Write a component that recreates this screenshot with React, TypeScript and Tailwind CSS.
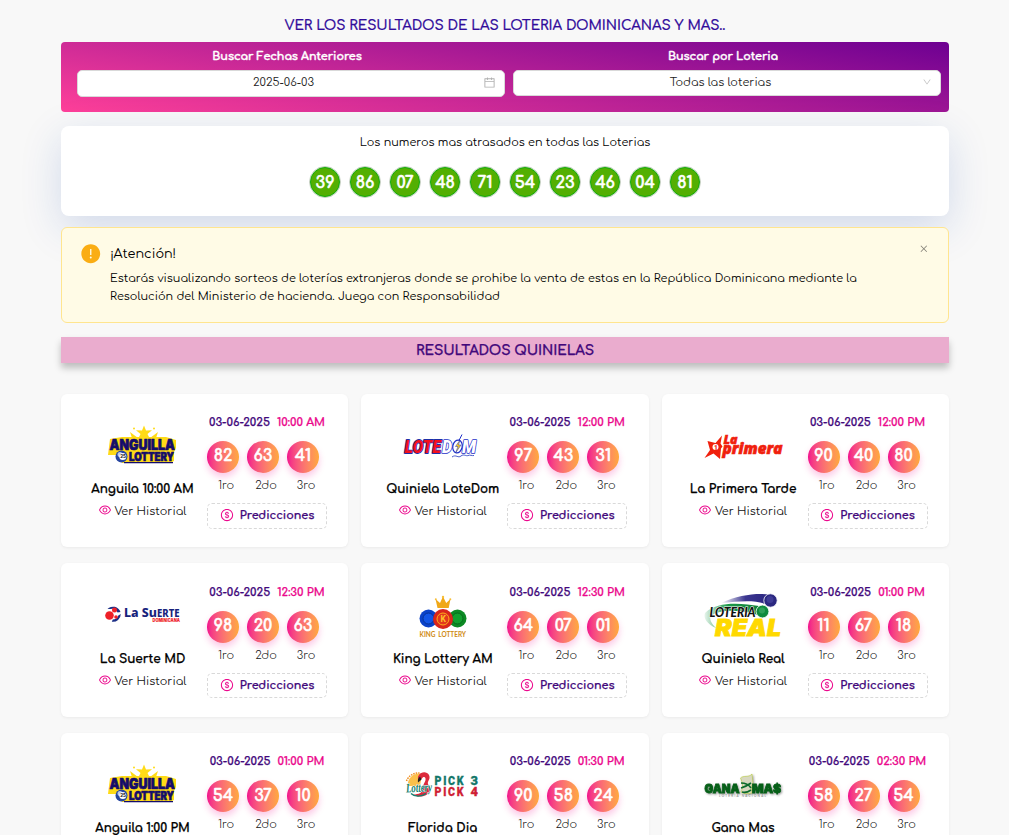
import type { ReactNode } from "react";
import {
  AiFillExclamationCircle,
  AiOutlineCalendar,
  AiOutlineClose,
  AiOutlineDollarCircle,
  AiOutlineDown,
  AiOutlineEye,
} from "react-icons/ai";

const overdue = ["39", "86", "07", "48", "71", "54", "23", "46", "04", "81"];

function LogoFrame({ children }: { children: ReactNode }) {
  return (
    <svg viewBox="0 0 84 56" className="h-14 w-21 shrink-0 overflow-visible">
      {children}
    </svg>
  );
}

function AnguillaLogo() {
  return (
    <LogoFrame>
      <path d="M44 6.500l2 5 6-.3-4.500 3.800 3 6H37.500l3-6-4.500-3.800 6 .3z" fill="#ffdb16" />
      <path d="M30 13l8 6h-6zM58 13l-8 6h6z" fill="#ffdb16" />
      <circle cx="34" cy="9.500" r="1" fill="#ffdb16" />
      <circle cx="54" cy="9.500" r="1" fill="#ffdb16" />
      <path d="M10 20l12-2h44l10 3v8l-2 4v9l-4 2H22l-3-8H8z" fill="#ffdb16" />
      <g fontFamily="Inter, sans-serif" fontWeight="900" fill="#140c6b" stroke="#140c6b" strokeWidth=".7" strokeLinejoin="round">
        <text x="9.500" y="30.500" fontSize="14" textLength="65.500" lengthAdjust="spacingAndGlyphs">ANGUILLA</text>
        <text x="29" y="42" fontSize="11.500" textLength="45" lengthAdjust="spacingAndGlyphs">LOTTERY</text>
      </g>
      <path d="M24 43.600h49" stroke="#140c6b" strokeWidth="1.200" />
      <circle cx="21.500" cy="37.500" r="6" fill="#2746a0" />
      <circle cx="20" cy="35.500" r="2.500" fill="#b9c8ee" />
      <circle cx="22.800" cy="37.500" r="3.500" fill="#fff" />
      <text x="20.200" y="39.400" fontSize="4.500" fontFamily="Inter, sans-serif" fontWeight="800" fill="#222">25</text>
    </LogoFrame>
  );
}

function LoteDomLogo() {
  return (
    <LogoFrame>
      <g fontFamily="Roboto, sans-serif" fontWeight="900" fontStyle="italic" fontSize="18.500" strokeLinejoin="round" paintOrder="stroke">
        <text x="4.500" y="34" fill="#f5101c" stroke="#1d2fa8" strokeWidth="1.800" textLength="36.500" lengthAdjust="spacingAndGlyphs">LOTE</text>
        <text x="42" y="34" fill="#fff" stroke="#1d2fc8" strokeWidth="1.600" textLength="10" lengthAdjust="spacingAndGlyphs">D</text>
        <text x="62" y="34" fill="#fff" stroke="#1d2fc8" strokeWidth="1.600" textLength="14" lengthAdjust="spacingAndGlyphs">M</text>
      </g>
      <ellipse cx="57.500" cy="27.500" rx="4.700" ry="6.500" fill="#fff" stroke="#1d2fc8" strokeWidth="1.200" transform="rotate(12 57.500 27.500)" />
      <path d="M62 15.500l-3 6" stroke="#1d2fc8" strokeWidth="1" />
      <path d="M60 21l-4.500 6.500H58L55.500 34l5.500-8h-2.500z" fill="#ffd21a" stroke="#1d2fb8" strokeWidth=".5" />
      <path d="M52 38c4-3 6 1.500 9-1s5 .5 7-.5 4 .5 6 0" fill="none" stroke="#3348c4" strokeWidth=".9" />
    </LogoFrame>
  );
}

function PrimeraLogo() {
  return (
    <LogoFrame>
      <path d="M21 16.500l-1.500 8 2 3-1.500 2-1 10.500-6.500-5.500-9 4.500 5.500-8-2.500-9 8 2z" fill="#f0200d" />
      <circle cx="14.500" cy="28" r="3" fill="#fff" />
      <text x="13" y="30.500" fontSize="6.500" fontWeight="900" fontFamily="Roboto, sans-serif" fill="#f0200d">1</text>
      <g fontFamily="'Open Sans', sans-serif" fontWeight="800" fontStyle="italic" fill="#f0200d" stroke="#f0200d" strokeWidth=".6">
        <text x="22.500" y="25.300" fontSize="12.500" textLength="14" lengthAdjust="spacingAndGlyphs">La</text>
        <text x="21.500" y="34.500" fontSize="15" textLength="60" lengthAdjust="spacingAndGlyphs">primera</text>
      </g>
    </LogoFrame>
  );
}

function SuerteLogo() {
  return (
    <LogoFrame>
      <path d="M7.500 20a7.800 7.800 0 0 1 13 3l-3 .5a6 6 0 0 0-7-3.500z" fill="#1c2f86" />
      <path d="M20.800 25a7.800 7.800 0 0 1-9 7.700l1-2.200a6 6 0 0 0 5.500-4z" fill="#1c2f86" />
      <circle cx="9.500" cy="26.500" r="4.300" fill="#ee2028" />
      <circle cx="14.500" cy="21" r="2.500" fill="#ee2028" />
      <circle cx="16" cy="28" r="1.800" fill="#ee2028" />
      <g fontFamily="'Noto Sans', sans-serif" fontWeight="800" fill="#17237c">
        <text x="24" y="27.500" fontSize="13" textLength="33" lengthAdjust="spacingAndGlyphs">La Su</text>
        <text x="57" y="27.500" fontSize="10.500" textLength="22.500" lengthAdjust="spacingAndGlyphs">ERTE</text>
      </g>
      <text x="52.500" y="32.800" fontSize="4.800" fontFamily="Inter, sans-serif" fontWeight="900" fill="#ee2028" textLength="27.500" lengthAdjust="spacingAndGlyphs">DOMINICANA</text>
    </LogoFrame>
  );
}

function KingLogo() {
  return (
    <LogoFrame>
      <circle cx="28.500" cy="29.500" r="9" fill="#0b43c9" />
      <circle cx="28.500" cy="29.500" r="5.500" fill="#1255e6" stroke="#07308f" strokeWidth=".9" />
      <circle cx="57.500" cy="29.500" r="9" fill="#0c8a24" />
      <circle cx="57.500" cy="29.500" r="5.500" fill="#11a02d" stroke="#07631a" strokeWidth=".9" />
      <circle cx="43" cy="30" r="10" fill="#d9251c" />
      <circle cx="43" cy="30" r="6" fill="#e2391d" stroke="#ffae1b" strokeWidth="1" />
      <text x="40.400" y="33" fontSize="8.500" fontFamily="Roboto, sans-serif" fontWeight="700" fill="#ffc02a">K</text>
      <path d="M37.500 19L35.500 10l4.500 4L43 7.500l3.200 6.500L50.500 10l-1.800 9z" fill="#f0a818" />
      <circle cx="43" cy="8" r="1.200" fill="#f7bf3a" />
      <circle cx="35.800" cy="10.300" r="1" fill="#f7bf3a" />
      <circle cx="50.300" cy="10.300" r="1" fill="#f7bf3a" />
      <text x="19.500" y="47.500" fontSize="7.500" fontFamily="Lato, sans-serif" fontWeight="700" fill="#cf8a12" textLength="46.500" lengthAdjust="spacingAndGlyphs" wordSpacing="1.500">KING LOTTERY</text>
    </LogoFrame>
  );
}

function RealLogo() {
  return (
    <LogoFrame>
      <defs>
        <linearGradient id="real-blue" x1="0" x2="1">
          <stop offset="0" stopColor="#3b3690" stopOpacity="0" />
          <stop offset=".5" stopColor="#3b3690" />
          <stop offset="1" stopColor="#2a2580" />
        </linearGradient>
        <linearGradient id="real-green" x1="0" x2="1">
          <stop offset="0" stopColor="#1c9a4a" stopOpacity=".1" />
          <stop offset=".4" stopColor="#1c9a4a" />
          <stop offset="1" stopColor="#0e7e38" />
        </linearGradient>
      </defs>
      <path d="M20 14C38 6 54 4 69 5.500v12C58 10 40 12 20 14z" fill="url(#real-blue)" />
      <path d="M4 24C16 12 40 14 58 17l2 11c-8-6-40-10-50-1-2 3 0 7 5 12C6 35 2 29 4 24z" fill="url(#real-green)" />
      <circle cx="69.500" cy="11.500" r="6.700" fill="#2b2880" stroke="#fff" strokeWidth=".8" />
      <circle cx="69" cy="10.500" r="3.500" fill="#3f3b96" />
      <circle cx="61.500" cy="22.500" r="6.400" fill="#0f8a3e" stroke="#fff" strokeWidth=".8" />
      <circle cx="61" cy="21.500" r="3" fill="#2fa05a" />
      <text x="8.500" y="27.500" fontSize="12.500" fontFamily="Lato, sans-serif" fontWeight="900" fontStyle="italic" fill="#111" stroke="#fff" strokeWidth="1" paintOrder="stroke" textLength="46" lengthAdjust="spacingAndGlyphs">LOTERIA</text>
      <text x="14" y="47" fontSize="23" fontFamily="Inter, sans-serif" fontWeight="900" fontStyle="italic" fill="#ffd900" stroke="#ffd900" strokeWidth=".8" textLength="66" lengthAdjust="spacingAndGlyphs">REAL</text>
    </LogoFrame>
  );
}

function FloridaLogo() {
  return (
    <LogoFrame>
      <path d="M8 25a11 11 0 0 1 14-9l-2 12H8z" fill="#fbc04a" />
      <path d="M6.500 23a12.500 12.500 0 0 1 13-8" fill="none" stroke="#f08c1e" strokeWidth="1.500" strokeDasharray="1.500 1" />
      <path d="M19 17c2-3.500 8-4 10 0 2 4.500-2 6-1 9 1 3 4 4 2 7-3 6-12 7-17 3.500 6 0 10-2 10-6.500 0-5 3-6 2.500-9.500-.5-2-2.500-2-3.500 0l-3 3c-1.500-2-1.500-5 0-6.500z" fill="#dc2a3c" />
      <path d="M18 24.500c-.5-2.500 0-4.500 2-6l1.500 3z" fill="#222" />
      <path d="M11 35.500c3 3 10 4 15 0" fill="none" stroke="#13806f" strokeWidth="1.400" />
      <text x="6" y="34" fontSize="13" fontFamily="'Liberation Serif', serif" fontWeight="700" fontStyle="italic" fill="#13806f" stroke="#fff" strokeWidth=".9" paintOrder="stroke" textLength="26" lengthAdjust="spacingAndGlyphs" transform="rotate(-3 18 30)">Lottery</text>
      <g fontFamily="Roboto, sans-serif" fontWeight="900" fontSize="13.500" strokeWidth=".3">
        <g fill="#14776a" stroke="#14776a">
          <text x="34.500" y="26.700" fontSize="13" letterSpacing="2.100" transform="translate(34.500 0) scale(.82 1) translate(-34.500 0)">PICK</text>
          <text x="70.500" y="26.700" textLength="7.500" lengthAdjust="spacingAndGlyphs">3</text>
        </g>
        <g fill="#cf1f35" stroke="#cf1f35">
          <text x="34.500" y="38.300" fontSize="13" letterSpacing="2.100" transform="translate(34.500 0) scale(.82 1) translate(-34.500 0)">PICK</text>
          <text x="70.500" y="38.300" textLength="7.500" lengthAdjust="spacingAndGlyphs">4</text>
        </g>
      </g>
    </LogoFrame>
  );
}

function GanaMasLogo() {
  return (
    <LogoFrame>
      <g className="drop-shadow-[1px_1.500px_1px_rgba(0,0,0,0.4)]">
        <path d="M39.500 20c3-3 8 0 11.500-4l1 9c-1 2-2 3-1 10-4 1-8 1-11-1 2-4 2-9-.5-14z" fill="#d8d8c0" stroke="#b8cf3a" strokeWidth=".6" />
        <path d="M40 25c4 0 8 2 10 5M40 30c3-1 6-2 10-5M41 34c3 1 6 0 9-2" fill="none" stroke="#0b6b2c" strokeWidth="1.600" />
        <g fontFamily="Inter, sans-serif" fontWeight="900" fontSize="12" fill="#066018" stroke="#066018" strokeWidth=".8">
          <text x="3.500" y="34.500" textLength="35" lengthAdjust="spacingAndGlyphs">GANA</text>
          <text x="51" y="34.500" textLength="29" lengthAdjust="spacingAndGlyphs">MA$</text>
        </g>
      </g>
      <text x="18" y="39.200" fontSize="3" fontFamily="Lato, sans-serif" fill="#777" textLength="47">LOTERIA NACIONAL</text>
    </LogoFrame>
  );
}

type Draw = { name: string; time: string; numbers: string[]; logo: ReactNode };

const draws: Draw[] = [
  { name: "Anguila 10:00 AM", time: "10:00 AM", numbers: ["82", "63", "41"], logo: <AnguillaLogo /> },
  { name: "Quiniela LoteDom", time: "12:00 PM", numbers: ["97", "43", "31"], logo: <LoteDomLogo /> },
  { name: "La Primera Tarde", time: "12:00 PM", numbers: ["90", "40", "80"], logo: <PrimeraLogo /> },
  { name: "La Suerte MD", time: "12:30 PM", numbers: ["98", "20", "63"], logo: <SuerteLogo /> },
  { name: "King Lottery AM", time: "12:30 PM", numbers: ["64", "07", "01"], logo: <KingLogo /> },
  { name: "Quiniela Real", time: "01:00 PM", numbers: ["11", "67", "18"], logo: <RealLogo /> },
  { name: "Anguila 1:00 PM", time: "01:00 PM", numbers: ["54", "37", "10"], logo: <AnguillaLogo /> },
  { name: "Florida Dia", time: "01:30 PM", numbers: ["90", "58", "24"], logo: <FloridaLogo /> },
  { name: "Gana Mas", time: "02:30 PM", numbers: ["58", "27", "54"], logo: <GanaMasLogo /> },
];

const places = ["1ro", "2do", "3ro"];

function DrawCard({ draw }: { draw: Draw }) {
  return (
    <article className="flex h-[153.600px] rounded-md bg-white pl-4 shadow-[0_1px_3px_rgba(0,0,0,0.06)]">
      <div className="flex w-[130px] shrink-0 flex-col items-center pt-[25.400px]">
        {draw.logo}
        <h3 className="mt-[5px] ml-px h-[18px] text-[12px] leading-[18px] font-bold tracking-[-0.04px] whitespace-nowrap text-black [-webkit-text-stroke:0.25px_currentColor]">
          {draw.name}
        </h3>
        <a className="mt-1 flex h-[19px] items-center gap-[3px] text-[11.200px] leading-[19px] whitespace-nowrap text-[#111]">
          <AiOutlineEye className="mb-[3px] size-[14px] text-[#eb078c]" />
          <span className="pt-px">Ver Historial</span>
        </a>
      </div>
      <div className="w-[120px] shrink-0 pt-[20.400px]">
        <div className="flex h-[18px] justify-center gap-[7px] text-[11.200px] leading-[18px] font-bold whitespace-nowrap [-webkit-text-stroke:0.25px_currentColor]">
          <span className="text-[#42087b]">03-06-2025</span>
          <span className="text-[#eb078c]">{draw.time}</span>
        </div>
        <div className="flex gap-2 pt-[9px]">
          {draw.numbers.map((n, i) => (
            <div key={i} className="flex w-8 flex-col items-center">
              <span className="flex size-8 items-center justify-center rounded-full bg-linear-to-r from-[#f2058c] to-[#ffa93a] pb-px text-[16px] leading-none font-bold text-white shadow-[0_4px_7px_rgba(242,5,140,0.22)] [-webkit-text-stroke:0.5px_currentColor]">
                {n}
              </span>
              <span className="mt-[5px] ml-[6px] h-4 text-[11.200px] leading-4 font-light text-[#111]">{places[i]}</span>
            </div>
          ))}
        </div>
        <button className="mt-[9px] flex h-[25.600px] w-[120px] items-center justify-center gap-[6px] rounded-[5px] border border-dashed border-[#d9d9d9] text-[11.200px] font-bold text-[#42087b]">
          <AiOutlineDollarCircle className="mb-px size-[14px] text-[#eb078c]" />
          <span className="pt-[2px] tracking-[-0.04px] [-webkit-text-stroke:0.25px_currentColor]">Predicciones</span>
        </button>
      </div>
    </article>
  );
}

export default function App() {
  return (
    <div className="h-[835px] overflow-hidden bg-[#f8f8f8] pl-[61px] font-['Comfortaa','Quicksand','Lato',sans-serif] text-[11.200px] text-black">
      <main className="w-[888px]">
        <h1 className="h-9 pt-[15px] text-center text-[13.600px] leading-[22px] font-semibold tracking-[-0.07px] text-[#310c9b] [-webkit-text-stroke:0.2px_currentColor]">
          VER LOS RESULTADOS DE LAS LOTERIA DOMINICANAS Y MAS..
        </h1>

        <section className="mt-1.5 flex h-[70px] gap-2 rounded-[4px] bg-[linear-gradient(9deg,#ff4099,#6d0092)] pt-[6px] pr-2 pl-4">
          <div className="flex-1">
            <div className="h-[18px] pr-2 text-center leading-[18px] font-bold tracking-[-0.07px] text-white [-webkit-text-stroke:0.4px_currentColor]">Buscar Fechas Anteriores</div>
            <div className="mt-1 flex h-[26.500px] items-center rounded-[5px] border border-[#d9d9d9] bg-white pr-[8px] pl-[6px] text-[#222]">
              <span className="flex-1 text-center">2025-06-03</span>
              <AiOutlineCalendar className="mb-px size-[13px] text-[#b0b0b0]" />
            </div>
          </div>
          <div className="flex-1">
            <div className="h-[18px] pr-2 text-center leading-[18px] font-bold tracking-[-0.07px] text-white [-webkit-text-stroke:0.4px_currentColor]">Buscar por Loteria</div>
            <div className="mt-1 flex h-[25.600px] items-center rounded-[5px] border border-[#d9d9d9] bg-white pr-[8px] pl-[5px] text-[#222]">
              <span className="flex-1 pt-px text-center">Todas las loterias</span>
              <AiOutlineDown className="mb-px size-[10px] text-[#bfbfbf]" />
            </div>
          </div>
        </section>

        <section className="mt-[14px] h-[90px] rounded-lg bg-white pt-2 shadow-[0_12px_40px_rgba(23,73,173,0.17)]">
          <p className="text-center leading-[18px]">Los numeros mas atrasados en todas las Loterias</p>
          <div className="mt-[14px] flex justify-center gap-2">
            {overdue.map((n) => (
              <span key={n} className="flex size-8 items-center justify-center rounded-full border border-[#c4cfc0] bg-white">
                <span className="flex size-[30px] items-center justify-center rounded-full border border-[#11ab0b] bg-[#53af02] pt-px text-[16px] leading-none font-bold text-white [-webkit-text-stroke:0.5px_currentColor]">
                  {n}
                </span>
              </span>
            ))}
          </div>
        </section>

        <section className="mt-[11px] flex h-24 rounded-md border border-[#ffe58f] bg-[#fffbe6] pt-4 pl-[18px]">
          <AiFillExclamationCircle className="-mt-px size-[21.500px] shrink-0 text-[#faad14]" />
          <div className="ml-[8.500px] w-[770px] pt-px">
            <div className="text-[12.800px] leading-[19px]">¡Atención!</div>
            <p className="mt-1.5 leading-[17.600px]">
              Estarás visualizando sorteos de loterías extranjeras donde se prohibe la venta de estas en la República Dominicana mediante la
              Resolución del Ministerio de hacienda. Juega con Responsabilidad
            </p>
          </div>
          <AiOutlineClose className="mr-[19.500px] ml-auto size-[9.600px] text-[#7c7a70]" />
        </section>

        <h2 className="mt-[14px] h-[26px] bg-[#eaacce] pt-px text-center text-[13.600px] leading-[26px] font-bold tracking-[-0.12px] text-[#42087b] shadow-[0_5px_7px_rgba(0,0,0,0.24)] [-webkit-text-stroke:0.25px_currentColor]">
          RESULTADOS QUINIELAS
        </h2>

        <section className="mt-[30.600px] grid grid-cols-3 gap-x-[12.800px] gap-y-4">
          {draws.map((d) => (
            <DrawCard key={d.name} draw={d} />
          ))}
        </section>
      </main>
    </div>
  );
}
